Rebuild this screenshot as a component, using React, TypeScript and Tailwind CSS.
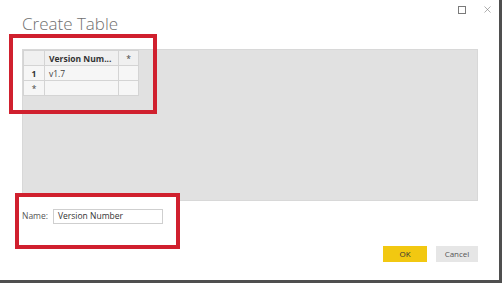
import { X } from "lucide-react";

const cell = "border border-[#d4d4d4] px-[4px] h-[15px] leading-[13px] whitespace-nowrap overflow-hidden";

export default function App() {
  return (
    <div className="relative h-[287px] w-[504px] bg-white font-['Open_Sans',sans-serif]">
      {/* dialog */}
      <div className="relative flex h-[283px] w-[502px] flex-col border-r-[3px] border-b-[3px] border-[#4f4f4f] bg-white">
        {/* window controls */}
        <div className="absolute right-[6px] top-[4px] flex items-center gap-[16px] text-[#7a7a7a]">
          <div className="h-[8px] w-[8px] border border-[#7a7a7a]" />
          <X size={11} strokeWidth={1.3} />
        </div>

        <h1 className="ml-[22px] mt-[10px] text-[17px] font-light leading-[27px] text-[#707070]">
          Create Table
        </h1>

        {/* data grid area */}
        <div className="ml-[22px] mt-[12px] h-[152px] w-[456px] border border-[#d8d8d8] bg-[#e1e1e1]">
          <table className="table-fixed border-collapse text-[8.5px] text-[#444]">
            <colgroup>
              <col className="w-[21px]" />
              <col className="w-[74px]" />
              <col className="w-[20px]" />
            </colgroup>
            <tbody>
              <tr className="bg-[#f0f0f0]">
                <td className={cell} />
                <td className={`${cell} font-bold text-[#333]`}>Version Num...</td>
                <td className={`${cell} text-center`}>*</td>
              </tr>
              <tr className="bg-[#f6f6f6]">
                <td className={`${cell} text-center font-bold text-[#333]`}>1</td>
                <td className={cell}>v1.7</td>
                <td className={cell} />
              </tr>
              <tr className="bg-[#f6f6f6]">
                <td className={`${cell} text-center`}>*</td>
                <td className={cell} />
                <td className={cell} />
              </tr>
            </tbody>
          </table>
        </div>

        {/* name field */}
        <div className="ml-[22px] mt-[8px] flex items-center">
          <span className="w-[31px] text-[8.5px] text-[#555]">Name:</span>
          <div className="flex h-[15px] w-[110px] items-center border border-[#cfcfcf] px-[4px] text-[8.5px] text-[#333]">
            Version Number
          </div>
        </div>

        {/* buttons */}
        <div className="mr-[21px] mt-[22px] flex justify-end gap-[9px] text-[8px]">
          <div className="flex h-[16px] w-[44px] items-center justify-center bg-[#f2c811] text-[#333]">OK</div>
          <div className="flex h-[16px] w-[42px] items-center justify-center bg-[#e6e6e6] text-[#555]">Cancel</div>
        </div>
      </div>

      {/* annotation boxes */}
      <div className="absolute left-[9px] top-[34px] h-[80px] w-[148px] border-[4px] border-[#d0202e]" />
      <div className="absolute left-[15px] top-[193px] h-[56px] w-[165px] border-[4px] border-[#d0202e] bg-white/0">
        <div className="absolute left-0 right-0 top-0 h-[4px] bg-white" />
      </div>
    </div>
  );
}
